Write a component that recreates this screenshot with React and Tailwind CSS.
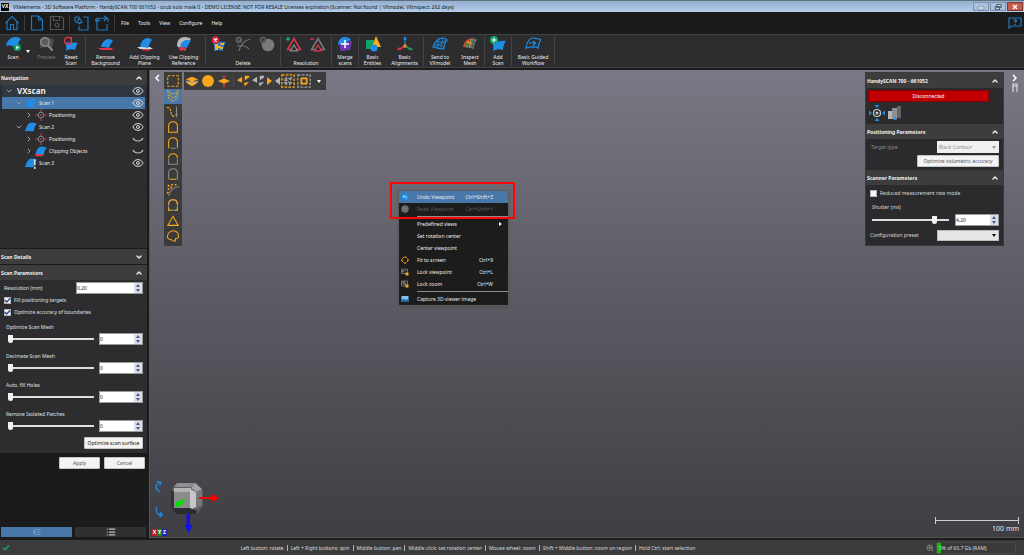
import React, { useState } from 'react';
import {
  Check,
  ChevronDown,
  ChevronRight,
  ChevronUp,
  Eye,
  List,
  ListTree,
  ZoomIn,
} from 'lucide-react';

const BLUE = '#1f8ce6';
const ORANGE = '#f9a61a';
const GREY = '#8c8c8c';

const PATCH = 'M1 10C2 4 6 1 11 1c2 0 4 1 5 2-2 2-3 4-3 7-2 1-4 1-6 0-2-1-4-1-6 0z';

function Icon({ children, box = '0 0 16 16', className = 'size-4' }) {
  return (
    <svg viewBox={box} className={className} fill="none" strokeWidth="1.2" aria-hidden="true">
      {children}
    </svg>
  );
}

/* ---------- ribbon icons ---------- */

const ribbonIcons = {
  scan: (
    <Icon>
      <path d={PATCH} fill={BLUE} />
      <circle cx="12.3" cy="11.5" r="3.6" fill="#0fa36b" />
      <path d="M11.2 9.7v3.6l2.9-1.8z" fill="#fff" />
    </Icon>
  ),
  preview: (
    <Icon>
      <path d="M2 3c4-2 10-2 14 1l-2 8-6-1-6 1z" fill="#4c4c4e" />
      <circle cx="7" cy="6" r="4.2" stroke="#8a8a8c" strokeWidth="1.5" fill="#5c5c5e" />
      <path d="M10 9.5l4.5 5" stroke="#8a8a8c" strokeWidth="2" />
    </Icon>
  ),
  reset: (
    <Icon>
      <path d="M2 6c4 1 8 0 13 1-2 2-2 4-3 7-3-1-6-1-9 1 1-3 0-6-1-9z" fill={BLUE} />
      <circle cx="5" cy="4.8" r="3.4" stroke="#ea2d40" strokeWidth="1.4" />
      <path d="M6 1h3v3z" fill="#ea2d40" />
    </Icon>
  ),
  removeBackground: (
    <Icon>
      <path d="M0 12h13l3 2H3z" fill="#e2344a" />
      <path d="M3 11c1-5 4-8 8-8 2 0 3 1 4 2-2 2-3 4-4 7-3-1-5-1-8-1z" fill={BLUE} />
    </Icon>
  ),
  addClipping: (
    <Icon>
      <path d="M0 11h13l3 2H3z" fill="#d9d9d9" />
      <path d="M5 13h8l1 1.5H6z" fill="#e2344a" />
      <path d="M3 11c1-6 4-9 8-9 2 0 3 1 4 2-2 2-3 5-4 8-3-1-5-1-8-1z" fill={BLUE} />
    </Icon>
  ),
  useClipping: (
    <Icon>
      <path d="M1 10C1 4 4 1 9 1c3 0 5 1 6 2L5 13z" fill="#b9b9bb" />
      <path d="M4 11c1-5 4-7 7-7 2 0 4 1 4 1-2 2-3 4-4 7-2-1-4-1-7-1z" fill={BLUE} />
      <path d="M3 11c3 0 5 0 7 1v3c-2-1-4-1-6 0z" fill="#e2344a" />
    </Icon>
  ),
  deleteTexture: (
    <Icon>
      <path d="M2 6c4 1 8-1 13 0-2 3-3 6-3 9-3-1-6-1-9 0 1-3 0-6-1-9z" fill="#2f7fbe" />
      <path d="M4 8h3v2h3v2H7v2H4zM9 7h4v2h-3zM10 11h2v2h-3z" fill="#f3b32c" />
      <circle cx="4.5" cy="4" r="3.7" fill="#e5243a" />
      <path d="M3 2.500l3 3m0-3l-3 3" stroke="#fff" />
    </Icon>
  ),
  deleteCurve: (
    <Icon>
      <path d="M4 15C5 9 9 5 15 3M2 10c4-1 9 0 12 3" stroke="#707072" />
      <circle cx="3.800" cy="4" r="3" fill="#6c6c6e" />
      <path d="M2.500 2.700l2.600 2.600m0-2.600L2.500 5.300" stroke="#2d2d2f" />
    </Icon>
  ),
  deleteSphere: (
    <Icon>
      <circle cx="9" cy="9" r="6.300" fill="#7b7b7d" />
      <circle cx="4" cy="4" r="3.300" fill="#5e5e60" />
      <path d="M2.700 2.700l2.600 2.600m0-2.600L2.700 5.300" stroke="#2d2d2f" />
    </Icon>
  ),
  resolutionUp: (
    <Icon>
      <path d="M0 3h4M2 1v4" stroke="#12b06e" strokeWidth="1.300" />
      <path d="M8 2.500l6.500 11h-13z" stroke="#e2344a" strokeWidth="1.500" />
      <path d="M8 9l3.500 5.800h-7z" stroke="#8a8a8c" fill="#2d2d2f" />
    </Icon>
  ),
  resolutionDown: (
    <Icon>
      <path d="M0 3h4" stroke="#e2344a" strokeWidth="1.300" />
      <path d="M8 2.500l6.500 11h-13z" stroke="#7b7b7d" strokeWidth="1.500" />
      <path d="M8 9l3.500 5.800h-7z" stroke="#e2344a" fill="#2d2d2f" />
    </Icon>
  ),
  merge: (
    <Icon>
      <path d="M2 8l13-3-2 9-9 1z" fill="#7037b5" />
      <path d="M1 9C1 4 4 1 8 1c3 0 5 1 6 3-3 1-5 4-9 4-2 0-3 0-4 1z" fill={BLUE} />
      <path d="M8 4v8M4 8h8" stroke="#fff" strokeWidth="1.500" />
    </Icon>
  ),
  entities: (
    <Icon>
      <path d="M1 4h8v9H1z" fill="#0fa36b" />
      <path d="M11 0l5 11H7z" fill="#fbae17" />
      <circle cx="9" cy="12" r="3.600" fill={BLUE} />
    </Icon>
  ),
  alignments: (
    <Icon>
      <path d="M8 10V3" stroke={BLUE} />
      <path d="M8 0l1.800 3.500H6.200z" fill={BLUE} />
      <path d="M8 10l-5 3" stroke="#e2344a" strokeWidth="1.500" />
      <path d="M0 14l2-3 2 3z" fill="#e2344a" />
      <path d="M8 10l5 3" stroke="#0fa36b" strokeWidth="1.500" />
      <path d="M16 14l-4 .3 2-3z" fill="#0fa36b" />
      <circle cx="8" cy="10" r="1.800" fill="#f08a1c" />
    </Icon>
  ),
  sendTo: (
    <Icon>
      <path d="M1 11C3 5 7 2 11 2c2 0 3 1 4 2-2 2-3 5-3 9-4 0-7-1-11-2z" stroke={BLUE} />
      <path d="M4 6c3-1 7 0 9 2M2 9c4-1 7 0 10 2M7 3c-1 3-1 6-1 10M11 2c-1 4-2 7-2 11M2 12l12-8" stroke={BLUE} strokeWidth=".8" />
    </Icon>
  ),
  inspect: (
    <Icon>
      <path d="M1 11C2 5 6 2 11 2L9 12c-3-1-5-1-8-1z" fill="#d6452f" />
      <path d="M5 6l4-3 1 5-3 4z" fill="#e8a72c" />
      <path d="M4 7l3 1-1 4-3-1z" fill="#3a9c55" />
      <path d="M10 2c2 0 4 1 5 2-2 2-3 5-3 9l-4-1z" fill="#68787c" />
      <path d="M6 4l8 3M3 8l9 2M8 3L6 12M12 2l-2 11" stroke="#3c4648" strokeWidth=".6" />
    </Icon>
  ),
  add: (
    <Icon>
      <path d="M2 5c4 2 9-1 14 0-2 3-3 6-3 9-3-1-6-1-10 1 1-3 0-7-1-10z" fill={BLUE} />
      <circle cx="4" cy="4" r="4" fill="#0fa36b" />
      <path d="M4 1.700v4.600M1.700 4h4.600" stroke="#fff" />
    </Icon>
  ),
  workflow: (
    <Icon>
      <path d="M1 12C2 6 4 2 8 2s5 2 8 1c-2 3-2 5-3 9-3-2-8-1-12 0z" stroke={BLUE} />
      <path d="M4 7h6M8 5l2.500 2L8 9.500" stroke={BLUE} />
    </Icon>
  ),
};

/* ---------- selection tools ---------- */

const ARCH = 'M3 14V7c0-3 2-5 5-5s5 2 5 5v7z';
const ARCH_OPEN = 'M3 14V7c0-3 2-5 5-5s5 2 5 5v7';

const selectionTools = [
  ['Rectangle selection', <path d="M2 2h12v12H2z" stroke={ORANGE} strokeDasharray="3 1.800" />],
  ['Free form selection', <path d="M2 2l5 4 3-1 4-3-1 9-5 3-5-3zM4 7l3 3 4-1 1-4" stroke="#d9a545" strokeDasharray="2.500 1" />],
  ['Brush selection', <><path d="M1 3c5-1 4 4 5 7s2 3 4 3" stroke={ORANGE} strokeDasharray="3 1" /><path d="M12 2v10m-1-2l1 3 1-3" stroke={GREY} /></>],
  ['Connected selection', <path d={ARCH} stroke={ORANGE} />],
  ['Grow selection', <><path d={ARCH_OPEN} stroke={ORANGE} /><path d="M5 14h6" stroke={GREY} /></>],
  ['Reduce selection', <><path d="M3 8v6h10V8" stroke={GREY} /><path d="M3 7c0-3 2-5 5-5s5 2 5 5" stroke={ORANGE} /></>],
  ['Base selection', <><path d={ARCH_OPEN} stroke={GREY} /><path d="M4 14h8" stroke={ORANGE} /></>],
  ['Curvature selection', <><path d="M3 15C4 9 8 5 15 4" stroke={GREY} /><path d="M2 3h2M6 2h2M10 2h2M2 7h2M5 5h2M1 11h2" stroke={ORANGE} strokeWidth="1.800" /></>],
  ['Boundary selection', <><path d={ARCH} stroke={GREY} /><path d="M3 7c0-3 2-5 5-5s5 2 5 5M3 11v3h3M10 14h3v-3" stroke={ORANGE} /></>],
  ['Triangle selection', <path d="M8 2.500l6 10.500H2z" stroke={ORANGE} />],
  ['Island selection', <path d="M5 3c3-2 8-1 9 3 1 3 0 5-3 5-1 1 1 3-1 3-2 0-3-2-5-2-3 0-4-3-3-5 0-2 1-3 3-4z" stroke={ORANGE} />],
];

const Target = () => (
  <Icon className="size-3">
    <path d="M8 0v4M8 12v4M0 8h4M12 8h4" stroke="#c8364a" strokeWidth="1.300" />
    <circle cx="8" cy="8" r="3.800" stroke="#8a8a8a" strokeWidth="1.300" />
    <circle cx="8" cy="8" r="1" fill="#8a8a8a" />
  </Icon>
);

const Patch = ({ accent }) => (
  <Icon className="h-3 w-3">
    <path d="M0 14C2 6 5 2 9 2c3 0 5 1 7 2-3 2-4 5-4 9-4 2-7-1-12 1z" fill={BLUE} />
    {accent === 'clip' && <path d="M1 12h9v3H1z" fill="#e2344a" />}
    {accent === 'alert' && <path d="M13 3v8M13 13v3" stroke="#ddd" strokeWidth="2.200" />}
  </Icon>
);

/* ---------- window chrome ---------- */

function TitleBar() {
  return (
    <header className="flex h-3 items-center justify-between border-t border-[#5f6f80] bg-linear-to-b from-[#95afcf] to-[#b3cdea] pl-px">
      <div className="flex items-center gap-1">
        <span className="flex size-2 items-center justify-center bg-black text-[5px] font-bold leading-none text-white">VX</span>
        <h1 className="text-[5px] leading-[8px] whitespace-nowrap text-[#101820]">
          VXelements - 3D Software Platform - HandySCAN 700 661052 - ozub kolo malé II - DEMO LICENSE: NOT FOR RESALE
          Licenses expiration (Scanner: Not found | VXmodel, VXinspect: 262 days)
        </h1>
      </div>
      <div className="flex gap-px pr-px">
        <button aria-label="Minimize" className="flex h-[9px] w-4 items-center justify-center border border-[#7c93ad] bg-[#a9c1dc]">
          <Icon box="0 0 10 6" className="h-1.5 w-2.5"><path d="M2 3h6v2H2z" fill="#fff" stroke="#66788c" strokeWidth=".6" /></Icon>
        </button>
        <button aria-label="Restore" className="flex h-[9px] w-4 items-center justify-center border border-[#7c93ad] bg-[#a9c1dc]">
          <Icon box="0 0 10 6" className="h-1.5 w-2.5"><path d="M4 .5h4v3H4zM2.500 2.500h4v3h-4z" fill="#ddd" stroke="#56667a" /></Icon>
        </button>
        <button aria-label="Close" className="flex h-[9px] w-4 items-center justify-center border border-[#7a3a35] bg-[#c9594a]">
          <Icon box="0 0 10 6" className="h-1.5 w-2.5"><path d="M3 1l4 4m0-4L3 5" stroke="#fff" strokeWidth="1.500" /></Icon>
        </button>
      </div>
    </header>
  );
}

const Divider = () => <span className="h-4 w-px bg-[#3c3c3c]" />;

function MenuBar() {
  const page = 'M2.500 1h7l4 4v10h-11zM9.500 1v4h4';
  return (
    <nav className="flex h-[22px] items-center bg-[#1b1b1b] text-[#f0f0f0]">
      <div className="flex flex-1 items-center gap-1 pl-1">
        <button aria-label="Home"><Icon><path d="M1.500 8L8 1.500 14.500 8M3 7v7.500h3.500V9.500h3v5H13V7" stroke="#1f78bd" /></Icon></button>
        <Divider />
        <button aria-label="New"><Icon><path d={page} stroke="#1f78bd" /></Icon></button>
        <button aria-label="Save">
          <Icon>
            <path d="M1.500 1.500h11l2 2v11h-13zM4.500 1.500v4h6v-4" stroke="#545454" />
            <circle cx="8" cy="10" r="2" stroke="#545454" />
          </Icon>
        </button>
        <Divider />
        <button aria-label="Import"><Icon><path d="M9 2h5v13H5v-4M1 2v4c2 3 5 2 7 1M6 3L3 6M1 2h4v3M6 4l2 3-3 2" stroke="#1f78bd" /></Icon></button>
        <button aria-label="Export"><Icon><path d="M4 3H3v12h10V9M2 7c0-4 4-4 10-4M10 1l3 2-3 3M1 4l2 3 3-2M14 3v4" stroke="#1f78bd" /></Icon></button>
        <Divider />
        <div className="flex gap-[9px] pl-0.5">
          {['File', 'Tools', 'View', 'Configure', 'Help'].map((name) => (
            <button key={name}>{name}</button>
          ))}
        </div>
      </div>
      <button aria-label="Help center" className="pr-0.5">
        <Icon box="0 0 14 12" className="h-3 w-3.5">
          <path d="M1 1h12v8H4l-3 2z" stroke="#1f78bd" />
          <path d="M5.500 3.500c0-1 3-1 3 .3 0 1-1.500 1-1.500 2M7 7v1" stroke="#2a8bd6" />
        </Icon>
      </button>
    </nav>
  );
}

function RibbonButton({ icon, label, width, muted }) {
  return (
    <button className={`flex flex-col items-center gap-0.5 ${width} ${muted ? 'text-[#7d7d7d]' : 'text-[#ededed]'}`}>
      {ribbonIcons[icon]}
      <span className="whitespace-pre text-center">{label}</span>
    </button>
  );
}

function RibbonGroup({ children, className = '' }) {
  return <div className={`flex border-r border-[#444446] ${className}`}>{children}</div>;
}

function RibbonIconGroup({ label, items }) {
  return (
    <RibbonGroup className="flex-col items-center justify-between px-px">
      <div className="flex">
        {items.map(([icon, name]) => (
          <button key={icon} aria-label={name} className="flex w-6 justify-center">{ribbonIcons[icon]}</button>
        ))}
      </div>
      <span>{label}</span>
    </RibbonGroup>
  );
}

function Ribbon() {
  return (
    <div className="flex h-[34px] border-y border-[#414143] bg-[#2d2d2f] py-px leading-[6px] text-[#ededed]">
      <RibbonGroup className="pr-0.5">
        <RibbonButton icon="scan" label="Scan" width="w-[26px]" />
        <button aria-label="Scan options" className="flex w-[7px] items-center">
          <Icon box="0 0 4 3" className="h-[3px] w-1"><path d="M0 0h4L2 3z" fill="#fff" /></Icon>
        </button>
        <RibbonButton icon="preview" label="Preview" width="w-[26px]" muted />
        <RibbonButton icon="reset" label={'Reset\nScan'} width="w-6" />
      </RibbonGroup>
      <RibbonGroup className="pr-0.5">
        <RibbonButton icon="removeBackground" label={'Remove\nBackground'} width="w-[39px]" />
        <RibbonButton icon="addClipping" label={'Add Clipping\nPlane'} width="w-[39px]" />
        <RibbonButton icon="useClipping" label={'Use Clipping\nReference'} width="w-[39px]" />
      </RibbonGroup>
      <RibbonIconGroup
        label="Delete"
        items={[['deleteTexture', 'Delete texture'], ['deleteCurve', 'Delete curve'], ['deleteSphere', 'Delete sphere']]}
      />
      <RibbonIconGroup
        label="Resolution"
        items={[['resolutionUp', 'Increase resolution'], ['resolutionDown', 'Decrease resolution']]}
      />
      <RibbonGroup><RibbonButton icon="merge" label={'Merge\nscans'} width="w-[26px]" /></RibbonGroup>
      <RibbonGroup>
        <RibbonButton icon="entities" label={'Basic\nEntities'} width="w-[27px]" />
        <RibbonButton icon="alignments" label={'Basic\nAlignments'} width="w-[37px]" />
      </RibbonGroup>
      <RibbonGroup>
        <RibbonButton icon="sendTo" label={'Send to\nVXmodel'} width="w-[32px]" />
        <RibbonButton icon="inspect" label={'Inspect\nMesh'} width="w-7" />
      </RibbonGroup>
      <RibbonGroup><RibbonButton icon="add" label={'Add\nScan'} width="w-[26px]" /></RibbonGroup>
      <RibbonGroup><RibbonButton icon="workflow" label={'Basic Guided\nWorkflow'} width="w-[42px]" /></RibbonGroup>
    </div>
  );
}

/* ---------- shared controls ---------- */

function SectionHeader({ title, closed }) {
  const Arrow = closed ? ChevronDown : ChevronUp;
  return (
    <button className="flex h-[15px] w-full items-center justify-between bg-[#3d3d3d] pr-1 pl-px text-left font-bold text-[#f0f0f0]">
      <span>{title}</span>
      <Arrow className="size-2" strokeWidth={4} />
    </button>
  );
}

function Spinner({ id, label, value, width }) {
  const [text, setText] = useState(value);
  return (
    <div className={`flex h-3 shrink-0 border border-[#9a9a9a] bg-white ${width}`}>
      <input
        id={id}
        aria-label={label}
        value={text}
        onChange={(e) => setText(e.target.value)}
        className="min-w-0 flex-1 text-[5px] leading-[8px] text-[#222] outline-none"
      />
      <div className="flex w-2 flex-col bg-[#dcdfe8]">
        <button aria-label="Increase" className="flex flex-1 items-center justify-center">
          <Icon box="0 0 4 3" className="h-[3px] w-1"><path d="M0 3h4L2 0z" fill="#4a5a92" /></Icon>
        </button>
        <button aria-label="Decrease" className="flex flex-1 items-center justify-center">
          <Icon box="0 0 4 3" className="h-[3px] w-1"><path d="M0 0h4L2 3z" fill="#4a5a92" /></Icon>
        </button>
      </div>
    </div>
  );
}

function Slider({ label, value }) {
  return (
    <input
      type="range"
      aria-label={label}
      defaultValue={value}
      className="ml-0.5 h-[9px] min-w-0 flex-1 appearance-none bg-transparent [&::-webkit-slider-runnable-track]:h-0.5 [&::-webkit-slider-runnable-track]:bg-[#dedede] [&::-webkit-slider-thumb]:-mt-[3px] [&::-webkit-slider-thumb]:h-2 [&::-webkit-slider-thumb]:w-[5px] [&::-webkit-slider-thumb]:appearance-none [&::-webkit-slider-thumb]:rounded-b-sm [&::-webkit-slider-thumb]:bg-[#f2f2f2]"
    />
  );
}

function Checkbox({ label, checked }) {
  return (
    <label className="flex h-3 items-center gap-[3px]">
      <span className="relative flex size-[7px]">
        <input
          type="checkbox"
          defaultChecked={checked}
          className="peer size-[7px] appearance-none border border-[#b5b5b5] bg-[#f4f4f4]"
        />
        <Check className="pointer-events-none absolute inset-0 hidden size-[7px] text-[#2c4a9a] peer-checked:block" strokeWidth={5} />
      </span>
      {label}
    </label>
  );
}

function LightButton({ children, className = '' }) {
  return (
    <button className={`h-3 rounded-[1px] border border-[#c4c4c4] bg-[#f3f3f3] text-center ${className}`}>{children}</button>
  );
}

/* ---------- left side ---------- */

const tree = [
  { name: 'VXscan', level: 0, open: true, visible: true },
  { name: 'Scan 1', level: 1, open: true, visible: true, icon: <Patch />, selected: true },
  { name: 'Positioning', level: 2, open: false, visible: true, icon: <Target /> },
  { name: 'Scan 2', level: 1, open: true, visible: true, icon: <Patch /> },
  { name: 'Positioning', level: 2, open: false, visible: false, icon: <Target /> },
  { name: 'Clipping Objects', level: 2, open: false, visible: false, icon: <Patch accent="clip" /> },
  { name: 'Scan 3', level: 1, visible: true, icon: <Patch accent="alert" /> },
];

const indents = ['gap-1 pl-[3px]', 'gap-0.5 pl-[13px]', 'gap-0.5 pl-[23px]'];

function TreeRow({ node }) {
  const Arrow = node.open ? ChevronDown : ChevronRight;
  let tone = '';
  if (node.level === 0) tone = 'bg-[#2f3740] text-[8px] font-bold';
  if (node.selected) tone = 'bg-[#4877aa]';
  return (
    <li className={`flex h-3 items-center pr-px text-[#ececec] ${indents[node.level]} ${tone}`}>
      <span className="flex w-2 shrink-0">
        {node.open !== undefined && <Arrow className="size-2 text-[#9b9b9b]" strokeWidth={3} />}
      </span>
      {node.icon && <span className="flex w-3 shrink-0 justify-center">{node.icon}</span>}
      <span className="flex-1">{node.name}</span>
      <button aria-label={`Toggle ${node.name}`}>
        {node.visible ? (
          <Eye className="size-3 text-[#d8d8d8]" strokeWidth={2} />
        ) : (
          <Icon box="0 0 12 12" className="size-3"><path d="M1 5c2 4 8 4 10 0" stroke="#bdbdbd" /></Icon>
        )}
      </button>
    </li>
  );
}

function SidePanel() {
  const meshOptions = ['Optimize Scan Mesh', 'Decimate Scan Mesh', 'Auto. fill Holes', 'Remove Isolated Patches'];
  return (
    <aside className="flex w-[147px] shrink-0 flex-col bg-[#1b1b1b]">
      <section className="h-[178px] bg-[#2d2d2f]">
        <SectionHeader title="Navigation" />
        <ul className="mx-0.5">
          {tree.map((node, i) => <TreeRow key={i} node={node} />)}
        </ul>
      </section>
      <div className="mt-px"><SectionHeader title="Scan Details" closed /></div>
      <section className="mt-px bg-[#2d2d2f] pb-1">
        <SectionHeader title="Scan Parameters" />
        <div className="flex flex-col px-1 pt-0.5 text-[#e0e0e0]">
          <div className="flex h-3 items-center justify-between">
            <label htmlFor="resolution">Resolution (mm)</label>
            <Spinner id="resolution" value="0,20" width="w-[67px]" />
          </div>
          <Checkbox label="Fill positioning targets" checked />
          <Checkbox label="Optimize accuracy of boundaries" checked />
          {meshOptions.map((name) => (
            <div key={name} className="py-0.5 pl-0.5">
              <div className="h-[13px] pt-[3px]">{name}</div>
              <div className="flex h-3 items-center gap-[5px]">
                <Slider label={name} value={0} />
                <Spinner label={`${name} value`} value="0" width="w-11" />
              </div>
            </div>
          ))}
          <LightButton className="mt-[3px] w-[59px] self-end bg-[#dadada] text-[#111]">Optimize scan surface</LightButton>
        </div>
      </section>
      <div className="flex justify-end gap-1 pt-1 pr-0.5 text-[#555]">
        <LightButton className="w-[41px]">Apply</LightButton>
        <LightButton className="w-[41px]">Cancel</LightButton>
      </div>
      <div className="mt-auto flex gap-[3px] px-px pb-px">
        <button aria-label="Tree view" className="flex h-2.5 flex-1 items-center justify-center bg-[#4877aa]">
          <ListTree className="size-2 text-[#9fb3c6]" />
        </button>
        <button aria-label="List view" className="flex h-2.5 flex-1 items-center justify-center bg-[#303030]">
          <List className="size-2.5 text-[#c0c0c0]" strokeWidth={3} />
        </button>
      </div>
    </aside>
  );
}

/* ---------- overlays on the 3D view ---------- */

function SelectionToolbar() {
  return (
    <div className="absolute top-0.5 left-3.5 flex h-[174px] w-[18px] flex-col bg-[#3b3b3b] pt-px pb-0.5">
      {selectionTools.map(([name, drawing], i) => (
        <button key={name} aria-label={name} className={`flex flex-1 items-center justify-center ${i === 1 ? 'bg-[#4877aa]' : ''}`}>
          <Icon className="size-3.5">{drawing}</Icon>
        </button>
      ))}
    </div>
  );
}

function ToolButton({ label, width = 'w-4', children }) {
  return (
    <button aria-label={label} className={`flex justify-center ${width}`}>
      <Icon className="size-3.5">{children}</Icon>
    </button>
  );
}

function ViewToolbar() {
  const splinters = (fill) => <path d="M1 7l6-4v7zM10 2h5v2l-5 3zM9 10l6-1-5 5z" fill={fill} />;
  return (
    <div className="absolute top-0.5 left-[34px] flex h-[18px] items-center bg-[#3b3b3b]">
      <ToolButton label="Select through">
        <path d="M1 6l7-3 7 3-7 3z" fill={ORANGE} />
        <path d="M1 10l7-2 7 2-7 4z" fill={ORANGE} />
        <path d="M1 8l7 2.500L15 8" stroke="#b5b5b5" />
      </ToolButton>
      <ToolButton label="Select visible">
        <circle cx="8" cy="8" r="6.800" fill={ORANGE} />
      </ToolButton>
      <ToolButton label="Select both sides">
        <path d="M1 8l7-3 7 3-7 3z" fill={ORANGE} />
        <path d="M8 1v4M8 11v4M6.500 3.500h3M6.500 12.500h3" stroke="#d1344a" strokeWidth="1.500" />
      </ToolButton>
      <span className="mx-px h-3 w-px bg-[#4c4c4c]" />
      <ToolButton label="Invert">{splinters(ORANGE)}</ToolButton>
      <ToolButton label="Clear" width="w-3.5">{splinters('#b5b5b5')}</ToolButton>
      <button aria-label="Grow" className="flex w-2 justify-center"><Icon box="0 0 6 8" className="h-2 w-1.5"><path d="M1 0l5 4-5 4z" fill={ORANGE} /></Icon></button>
      <span className="h-3 w-px bg-[#4c4c4c]" />
      <button aria-label="Shrink" className="flex w-1.5 justify-center"><Icon box="0 0 6 8" className="h-2 w-1.5"><path d="M6 0L1 4l5 4z" fill="#b5b5b5" /></Icon></button>
      <ToolButton label="Expand all">
        <path d="M1 1h14v14H1z" stroke={ORANGE} strokeWidth="1.500" strokeDasharray="3 1.500" />
        <path d="M4 7l2-3 1 3-2 1zM9 5l3-1-1 3zM9 9l3 1-2 2zM4 10l3 0-1 2z" stroke="#a9a9a9" />
      </ToolButton>
      <ToolButton label="Fit selection">
        <path d="M1 1h14v14H1z" stroke="#a0a0a0" strokeWidth="1.500" strokeDasharray="3 1.500" />
        <path d="M5 5h6v6H5z" stroke={ORANGE} strokeWidth="2" />
      </ToolButton>
      <button aria-label="More tools" className="flex w-3.5 justify-center">
        <Icon box="0 0 4 3" className="h-[3px] w-1"><path d="M0 0h4L2 3z" fill="#fff" /></Icon>
      </button>
    </div>
  );
}

const menuIcons = {
  undo: <Icon><circle cx="8" cy="8" r="7.500" fill={BLUE} /><path d="M5 5v3h3M5 8c2-3 6-2 6 1 0 1-1 2-2 3" stroke="#fff" /></Icon>,
  redo: <Icon><circle cx="8" cy="8" r="7.500" fill="#6a6a6a" /><path d="M11 5v3H8M11 8C9 5 5 6 5 9" stroke="#888" /></Icon>,
  fit: <Icon><circle cx="8" cy="8" r="6" stroke={ORANGE} strokeWidth="2" strokeDasharray="5 2" /><path d="M8 0v4M8 12v4M0 8h4M12 8h4" stroke={ORANGE} /></Icon>,
  lock: <Icon><path d="M1 2h12v9H1zM3 5h3v3H3zM8 5h3" stroke="#a5a5a5" /><path d="M9 9h6v6H9z" fill={ORANGE} /></Icon>,
  lockZoom: <Icon><path d="M1 2h12v10H1z" stroke="#a5a5a5" /><circle cx="6" cy="6" r="2.500" stroke="#ccc" /><path d="M8 8l2 2" stroke="#ccc" /><path d="M9 9h6v6H9z" fill={ORANGE} /></Icon>,
  image: <Icon><path d="M1 2h14v12H1z" fill="#7fc1f1" /><path d="M1 10l4-2 4 2 6-2v6H1z" fill="#1668ad" /></Icon>,
};

const menuItems = [
  { name: 'Undo Viewpoint', keys: 'Ctrl+Shift+Z', icon: 'undo', active: true },
  { name: 'Redo Viewpoint', keys: 'Ctrl+Shift+Y', icon: 'redo', disabled: true },
  null,
  { name: 'Predefined views', submenu: true },
  { name: 'Set rotation center' },
  { name: 'Center viewpoint' },
  { name: 'Fit to screen', keys: 'Ctrl+9', icon: 'fit' },
  { name: 'Lock viewpoint', keys: 'Ctrl+L', icon: 'lock' },
  { name: 'Lock zoom', keys: 'Ctrl+W', icon: 'lockZoom' },
  null,
  { name: 'Capture 3D viewer image', icon: 'image' },
];

function ContextMenu() {
  return (
    <>
      <div role="menu" className="absolute top-[120px] left-[248px] w-[111px] border border-[#5c5c5e] bg-[#1c1c1c] text-[#ededed] shadow-sm">
        {menuItems.map((item, i) =>
          item ? (
            <button
              key={item.name}
              role="menuitem"
              disabled={item.disabled}
              className={`flex h-3 w-full items-center text-left ${item.active ? 'bg-[#4877aa]' : ''} ${item.disabled ? 'text-[#5b5b5b]' : ''}`}
            >
              <span className="flex w-[18px] shrink-0 pl-0.5 [&>svg]:size-2">{item.icon && menuIcons[item.icon]}</span>
              <span className="flex-1 whitespace-nowrap">{item.name}</span>
              {item.keys && <span className="pr-[15px]">{item.keys}</span>}
              {item.submenu && (
                <Icon box="0 0 3 4" className="mr-1.5 h-1 w-[3px]"><path d="M0 0l3 2-3 2z" fill="#fff" /></Icon>
              )}
            </button>
          ) : (
            <div key={i} className="my-px ml-[18px] h-px bg-[#8b8b8b]" />
          )
        )}
      </div>
      <div className="pointer-events-none absolute top-28 left-[240px] h-[37px] w-[125px] border-2 border-[#fb0505]" />
    </>
  );
}

function ScannerPanel() {
  return (
    <section className="absolute top-0.5 right-5 w-[139px] border border-[#3a3a3c] bg-[#2b2b2d] pb-1 text-[#d8d8d8]">
      <SectionHeader title="HandySCAN 700 - 661052" />
      <div className="mt-0.5 mr-3.5 ml-0.5 h-3 border border-[#8a0000] bg-[#c00000] text-center leading-[10px] text-white">Disconnected</div>
      <div className="flex h-[22px] items-center gap-0.5 pl-[3px]">
        <button aria-label="Positioning targets">
          <Icon>
            <circle cx="8" cy="8" r="3.500" stroke="#c9c9c9" />
            <circle cx="8" cy="8" r="1.500" fill="#c9c9c9" />
            <path d="M5.500 0h5L8 3zM5.500 16h5L8 13zM0 5.500v5L3 8zM16 5.500v5L13 8z" fill={BLUE} />
          </Icon>
        </button>
        <button aria-label="Scanner objects">
          <Icon>
            <path d="M1 6h5v8H1z" fill="#b5b5b5" />
            <path d="M5 3h5v11H5z" fill="#8f8f8f" />
            <path d="M10 1h4v12h-4z" fill="#646464" />
            <path d="M6 15l2-3 2 3z" fill={BLUE} />
          </Icon>
        </button>
      </div>
      <SectionHeader title="Positioning Parameters" />
      <div className="flex flex-col gap-0.5 pt-0.5 pr-1 pb-[3px] pl-[5px]">
        <div className="flex h-3 items-center justify-between text-[#8c8c8c]">
          <label htmlFor="target-type">Target type</label>
          <div className="relative flex w-[62px] items-center">
            <select id="target-type" disabled className="h-3 w-full appearance-none bg-[#f0f0f0] pl-0.5 text-[#8c8c8c] opacity-100">
              <option>Black Contour</option>
            </select>
            <Icon box="0 0 4 3" className="pointer-events-none absolute right-[3px] h-[3px] w-1"><path d="M0 0h4L2 3z" fill="#999" /></Icon>
          </div>
        </div>
        <LightButton className="w-[82px] self-end text-[#555]">Optimize volumetric accuracy</LightButton>
      </div>
      <SectionHeader title="Scanner Parameters" />
      <div className="flex flex-col pt-0.5 pr-1 pl-1">
        <Checkbox label="Reduced measurement rate mode" />
        <div className="h-[15px] pt-1 pl-0.5">Shutter (ms)</div>
        <div className="flex h-3 items-center gap-1.5">
          <Slider label="Shutter" value={84} />
          <Spinner label="Shutter (ms)" value="4,20" width="w-11" />
        </div>
        <div className="mt-[3px] flex h-3 items-center justify-between">
          <label htmlFor="preset">Configuration preset</label>
          <div className="relative flex w-[62px] items-center">
            <select id="preset" className="h-[11px] w-full appearance-none border border-[#bbb] bg-[#e6e6e6] text-black">
              <option></option>
            </select>
            <Icon box="0 0 4 3" className="pointer-events-none absolute right-[3px] h-[3px] w-1"><path d="M0 0h4L2 3z" fill="#000" /></Icon>
          </div>
        </div>
      </div>
    </section>
  );
}

function ViewCube() {
  return (
    <svg viewBox="0 0 72 56" className="absolute bottom-px left-0.5 h-14 w-[72px]" fill="none" aria-hidden="true">
      <path d="M9.500 11c-5-2-6-7-2-9M6 .5l4 1-1.500 3" stroke={BLUE} strokeWidth="1.300" transform="translate(-1 1)" />
      <path d="M5 27c-2 4 0 8 4 8M8 32l2.500 3-3 2" stroke={BLUE} strokeWidth="1.300" />
      <path d="M19 10l6-7h19l7 7v16l-6 8H24l-5-7z" fill="#5c5c60" />
      <path d="M25 3h18l-4 4H22z" fill="#8f8f8f" />
      <path d="M22 8h17v4H22z" fill="#b4b4b4" />
      <path d="M43 3l7 6-5 3-6-4z" fill="#a4a4a4" />
      <path d="M22 12h16v16H22z" fill="#8b8b8b" />
      <path d="M38 9l6 3v15l-6 3z" fill="#c6c6c6" />
      <path d="M44 12l6-3v16l-6 4z" fill="#77777a" />
      <path d="M19 10l3 2v16l-3-1z" fill="#333337" />
      <path d="M19 27l3 1h16l7 3-1 3H24z" fill="#2c2c30" />
      <path d="M24 22c2-1 3 0 4-1l3-2 2 2-3 3c0 3-6 4-7 1z" fill="#00e000" />
      <path d="M47 17h13v-3l7 4-7 4v-3H47z" fill="#f00" />
      <path d="M34.500 34h3.500v11h2.500l-4 8-4-8h2z" fill="#1010f5" />
    </svg>
  );
}

function Viewport() {
  return (
    <main className="relative flex-1 overflow-hidden border-b border-l border-[#55555a] bg-linear-to-b from-[#797884] to-[#3f3e43]">
      <button aria-label="Collapse left panel" className="absolute top-1 left-1">
        <Icon box="0 0 6 8" className="h-2 w-1.5"><path d="M5 1L2 4l3 3" stroke="#fff" strokeWidth="1.500" /></Icon>
      </button>
      <SelectionToolbar />
      <ViewToolbar />
      <ContextMenu />
      <ScannerPanel />
      <div className="absolute top-1 right-1.5 flex flex-col items-center gap-px">
        <button aria-label="Collapse right panel" className="flex">
          <Icon box="0 0 6 8" className="h-2 w-1.5"><path d="M1 1l3 3-3 3" stroke="#fff" strokeWidth="1.500" /></Icon>
        </button>
        <button aria-label="Dock" className="flex">
          <Icon box="0 0 6 10" className="h-2.5 w-1.5"><path d="M1 9V1h4v8M1 3h4" stroke="#ddd" /></Icon>
        </button>
      </div>
      <ViewCube />
      <div className="absolute bottom-px left-0.5 flex text-[5px] font-bold leading-[7px] text-white">
        <span className="w-[5px] bg-[#b52020] text-center">X</span>
        <span className="w-[5px] bg-[#1c8a1c] text-center">Y</span>
        <span className="w-[5px] bg-[#2020b0] text-center">Z</span>
      </div>
      <div className="absolute right-[5px] bottom-1 w-[84px] text-right text-[7px] leading-[8px] text-[#e4e4e4]">
        <svg viewBox="0 0 84 8" className="h-2 w-full" aria-hidden="true">
          <path d="M.5 0v7M83.500 0v7M0 3.500h84" stroke="#d0d0d0" fill="none" />
        </svg>
        <div>100 mm</div>
      </div>
    </main>
  );
}

function StatusBar() {
  const hints = [
    'Left button: rotate',
    'Left + Right buttons: spin',
    'Middle button: pan',
    'Middle click: set rotation center',
    'Mouse wheel: zoom',
    'Shift + Middle button: zoom on region',
    'Hold Ctrl: start selection',
  ];
  return (
    <footer className="flex h-[15px] items-center bg-[#3b3b3b] text-[#dcdcdc]">
      <Check className="ml-0.5 size-2 text-[#17a568]" strokeWidth={4} />
      <ul className="flex flex-1 justify-center whitespace-nowrap">
        {hints.map((hint, i) => (
          <li key={hint} className="flex items-center">
            {i > 0 && <span className="mx-[3px] h-1.5 w-px bg-[#b0b0b0]" />}
            {hint}
          </li>
        ))}
      </ul>
      <ZoomIn className="size-2 text-[#a8a8a8]" />
      <div className="mr-2 ml-0.5 flex h-3 w-20 items-center border border-[#4a4a4a] bg-linear-to-r from-[#06c106] from-5% to-[#393939] to-5% pl-0.5 whitespace-nowrap">
        5% of 60.7 Gb (RAM)
      </div>
    </footer>
  );
}

export default function App() {
  return (
    <div className="flex min-h-screen flex-col bg-[#1b1b1b] font-['Noto_Sans','Open_Sans',sans-serif] text-[5px] leading-[8px]">
      <TitleBar />
      <MenuBar />
      <Ribbon />
      <div className="flex flex-1 gap-0.5 py-0.5">
        <SidePanel />
        <Viewport />
      </div>
      <StatusBar />
    </div>
  );
}
